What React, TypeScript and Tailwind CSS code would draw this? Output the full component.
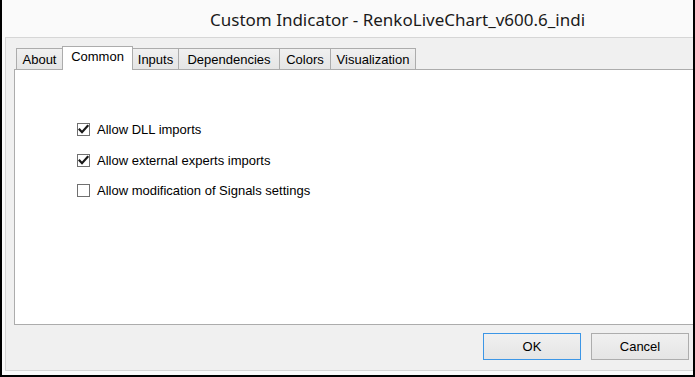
import type { ReactNode } from "react";

const tabs = [
  { label: "About", width: "w-[47px]" },
  { label: "Common", width: "w-[71px]", active: true },
  { label: "Inputs", width: "w-[47px]" },
  { label: "Dependencies", width: "w-[102px]" },
  { label: "Colors", width: "w-[52px]" },
  { label: "Visualization", width: "w-[86px]" }
];

const options = [
  { label: "Allow DLL imports", checked: true, gap: "mt-[53px]" },
  { label: "Allow external experts imports", checked: true, gap: "mt-[18px]" },
  { label: "Allow modification of Signals settings", checked: false, gap: "mt-[17px]" }
];

function Checkbox({ checked }: { checked: boolean }) {
  return (
    <span className="flex h-[13px] w-[13px] items-center justify-center border border-[#707070] bg-white">
      {checked ? (
        <svg width="11" height="11" viewBox="0 0 11 11">
          <path d="M1.5 5.5 L4 8.2 L9.5 2" fill="none" stroke="#1a1a1a" strokeWidth="2.2" strokeLinecap="square" />
        </svg>
      ) : null}
    </span>
  );
}

function Button({ children, focused }: { children: ReactNode; focused?: boolean }) {
  return (
    <button
      type="button"
      className={
        focused
          ? "h-[27px] w-[98px] border border-[#3c96e6] bg-gradient-to-b from-[#f0f0f0] to-[#e5e5e5] text-[13px] text-black"
          : "h-[27px] w-[98px] border border-[#adadad] bg-gradient-to-b from-[#f0f0f0] to-[#e5e5e5] text-[13px] text-black"
      }
    >
      {children}
    </button>
  );
}

export default function App() {
  return (
    <div className="flex h-[377px] w-[695px] flex-col border-b-2 border-l-2 border-r-2 border-black bg-[#fafafa] font-['Liberation_Sans',Arial,sans-serif] text-black">
      <div className="flex h-[37px] shrink-0 items-center pl-[208px] pt-[2px] font-['Noto_Sans','Open_Sans',sans-serif] text-[17px] text-[#1a1a1a]">
        Custom Indicator - RenkoLiveChart_v600.6_indi
      </div>

      <div className="ml-[3px] flex h-[334px] shrink-0 flex-col border-b border-l border-t border-[#d6d6d6] bg-[#f0f0f0] pl-[8px]">
        <div className="mt-[8px] flex h-[23px] items-end pl-[2px]">
          {tabs.map((tab, i) =>
            tab.active ? (
              <div
                key={tab.label}
                className={`relative z-10 -mb-px h-[24px] ${tab.width} ${i > 0 ? "-ml-px" : ""} border border-b-0 border-[#acacac] bg-white pt-[2px] text-center text-[13px] leading-[16px]`}
              >
                {tab.label}
              </div>
            ) : (
              <div
                key={tab.label}
                className={`h-[21px] ${tab.width} ${i > 0 ? "-ml-px" : ""} border border-b-0 border-[#acacac] bg-gradient-to-b from-[#f0f0f0] to-[#e5e5e5] pt-[3px] text-center text-[13px] leading-[16px]`}
              >
                {tab.label}
              </div>
            )
          )}
        </div>

        <div className="flex h-[256px] flex-col border-b border-l border-t border-[#acacac] bg-white pl-[62px]">
          {options.map((opt) => (
            <label key={opt.label} className={`${opt.gap} flex h-[13px] items-center gap-[7px] text-[13px]`}>
              <Checkbox checked={opt.checked} />
              <span className="leading-[13px]">{opt.label}</span>
            </label>
          ))}
        </div>

        <div className="mt-[8px] flex justify-end gap-[10px] pr-[4px]">
          <Button focused>OK</Button>
          <Button>Cancel</Button>
        </div>
      </div>
    </div>
  );
}
